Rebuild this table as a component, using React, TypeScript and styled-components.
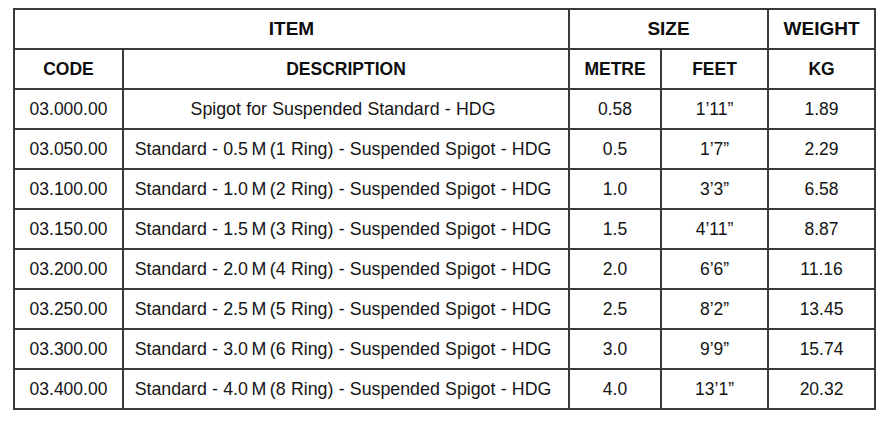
import React from 'react';
import styled, { createGlobalStyle } from 'styled-components';

const GlobalStyle = createGlobalStyle`
  html, body {
    margin: 0;
    padding: 0;
    background: #ffffff;
  }
  body {
    font-family: 'Liberation Sans', Arial, sans-serif;
    color: #111;
  }
`;

const rows = [
  { code: '03.000.00', desc: 'Spigot for Suspended Standard - HDG', metre: '0.58', feet: '1\u201911\u201D', kg: '1.89' },
  { code: '03.050.00', desc: 'Standard - 0.5\u2009M\u2009(1 Ring) - Suspended Spigot - HDG', metre: '0.5', feet: '1\u20197\u201D', kg: '2.29' },
  { code: '03.100.00', desc: 'Standard - 1.0\u2009M\u2009(2 Ring) - Suspended Spigot - HDG', metre: '1.0', feet: '3\u20193\u201D', kg: '6.58' },
  { code: '03.150.00', desc: 'Standard - 1.5\u2009M\u2009(3 Ring) - Suspended Spigot - HDG', metre: '1.5', feet: '4\u201911\u201D', kg: '8.87' },
  { code: '03.200.00', desc: 'Standard - 2.0\u2009M\u2009(4 Ring) - Suspended Spigot - HDG', metre: '2.0', feet: '6\u20196\u201D', kg: '11.16' },
  { code: '03.250.00', desc: 'Standard - 2.5\u2009M\u2009(5 Ring) - Suspended Spigot - HDG', metre: '2.5', feet: '8\u20192\u201D', kg: '13.45' },
  { code: '03.300.00', desc: 'Standard - 3.0\u2009M\u2009(6 Ring) - Suspended Spigot - HDG', metre: '3.0', feet: '9\u20199\u201D', kg: '15.74' },
  { code: '03.400.00', desc: 'Standard - 4.0\u2009M\u2009(8 Ring) - Suspended Spigot - HDG', metre: '4.0', feet: '13\u20191\u201D', kg: '20.32' },
];

const App = () => {
  return (
    <>
      <GlobalStyle />
      <Page>
        <Table>
          <colgroup>
            <col style={{ width: 109 }} />
            <col style={{ width: 446 }} />
            <col style={{ width: 92 }} />
            <col style={{ width: 107 }} />
            <col style={{ width: 107 }} />
          </colgroup>
          <thead>
            <tr>
              <HeadCell colSpan={2}>ITEM</HeadCell>
              <HeadCell colSpan={2}>SIZE</HeadCell>
              <HeadCell>WEIGHT</HeadCell>
            </tr>
            <tr>
              <SubHeadCell>CODE</SubHeadCell>
              <SubHeadCell>DESCRIPTION</SubHeadCell>
              <SubHeadCell>METRE</SubHeadCell>
              <SubHeadCell>FEET</SubHeadCell>
              <SubHeadCell>KG</SubHeadCell>
            </tr>
          </thead>
          <tbody>
            {rows.map((row) => (
              <tr key={row.code}>
                <Cell>{row.code}</Cell>
                <DescCell>{row.desc}</DescCell>
                <Cell>{row.metre}</Cell>
                <Cell>{row.feet}</Cell>
                <Cell>{row.kg}</Cell>
              </tr>
            ))}
          </tbody>
        </Table>
      </Page>
    </>
  );
};

export default App;

const Page = styled.div`
  padding: 8px 0 0 13px;
`;

const Table = styled.table`
  border-collapse: collapse;
  table-layout: fixed;
  width: 863px;
  border: 2px solid #3a3a3a;
`;

const Cell = styled.td`
  height: 38px;
  padding: 0;
  border: 2px solid #3a3a3a;
  text-align: center;
  vertical-align: middle;
  font-size: 17.5px;
  color: #151515;
  white-space: nowrap;
`;

const DescCell = styled(Cell)`
  font-size: 17.8px;
  word-spacing: 0.3px;
  padding-right: 6px;
`;

const HeadCell = styled(Cell).attrs({ as: 'th' })`
  font-weight: 700;
  font-size: 19px;
  color: #0d0d0d;
`;

const SubHeadCell = styled(Cell).attrs({ as: 'th' })`
  font-weight: 700;
  font-size: 17.5px;
  color: #0d0d0d;
`;
